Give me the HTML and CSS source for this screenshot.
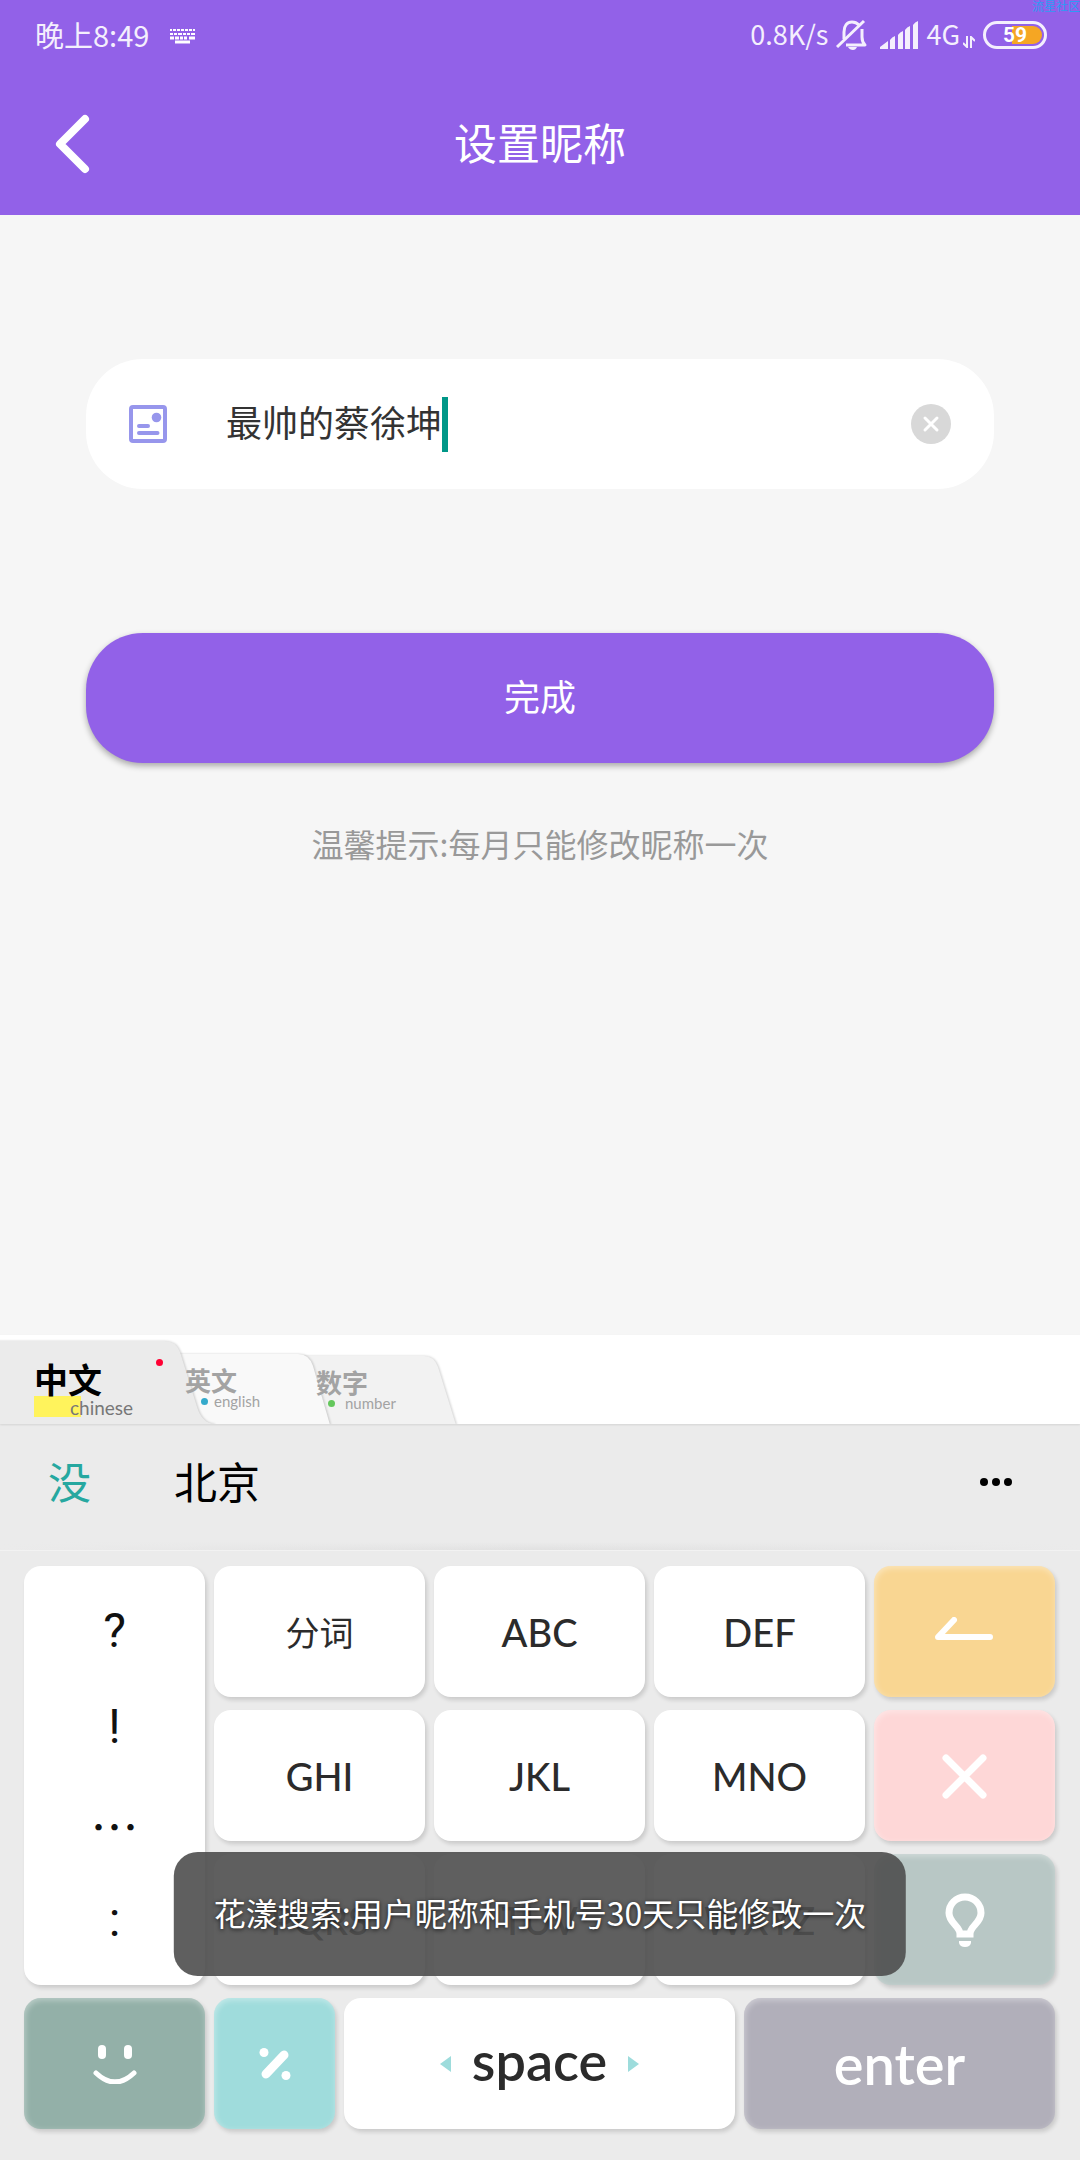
FILE: index.html
```html
<!DOCTYPE html>
<html lang="zh-CN">
<head>
<meta charset="utf-8">
<meta name="viewport" content="width=device-width, initial-scale=1">
<title>设置昵称</title>
<link rel="stylesheet" href="styles.css">
</head>
<body>
<div class="screen">
  <header class="header">
    <div class="status">
      <span class="status-time">晚上8:49</span>
      <svg class="status-keyboard" width="25" height="16" viewBox="0 0 25 16" fill="none" stroke="currentColor" stroke-width="2">
        <path d="M0 2h25" stroke-dasharray="2 1 3 1 3 1 3 1 3 1 3 1 3"/>
        <path d="M0 6h25" stroke-dasharray="3 1 3 1 4 1 3 1 3 1 4"/>
        <path d="M0 10h25" stroke-dasharray="4 1 4 1 3 1 3 2 6" stroke-width="3"/>
        <path d="M5 14h15" stroke-width="3"/>
      </svg>
      <span class="status-speed">0.8K/s</span>
      <svg class="status-bell" width="32" height="32" viewBox="0 0 32 32" fill="none" stroke="currentColor" stroke-width="3">
        <path d="M8 20v-7c0-6 3-10 8-10 3 0 5 1 7 3"/>
        <path d="M26 10v8c0 3 1 6 3 8H10" stroke-linejoin="round"/>
        <path d="M1 28 28 2"/>
        <path d="M12 28h9c-1 2-2 3-4 3s-4-1-5-3z" fill="currentColor" stroke="none"/>
      </svg>
      <svg class="status-signal" width="38" height="28" viewBox="0 0 38 28" fill="currentColor">
        <path d="M0 28v-2l8-6v8zM10 28v-9q2-3 5-4v13zM18 28V14q2-3 5-4v18zM25 28V9q2-3 5-4v23zM33 28V4q2-3 5-4v28z"/>
      </svg>
      <span class="status-net">4G</span>
      <svg class="status-data" width="12" height="12" viewBox="0 0 12 12" fill="none" stroke="currentColor" stroke-width="2">
        <path d="M4 0v11L0 7M8 12V1l4 4"/>
      </svg>
      <span class="battery"><span class="battery-fill"></span><span class="battery-text">59</span></span>
      <span class="watermark">流星社区</span>
    </div>
    <div class="navbar">
      <button class="back" type="button" aria-label="返回">
        <svg width="36" height="60" viewBox="0 0 36 60" fill="none" stroke="currentColor" stroke-width="8" stroke-linecap="round" stroke-linejoin="round"><path d="M31 5 6 30l25 25"/></svg>
      </button>
      <h1 class="title">设置昵称</h1>
    </div>
  </header>

  <main class="content">
    <form class="form">
      <div class="field">
        <label class="field-label" for="nickname" aria-label="昵称">
          <svg width="38" height="38" viewBox="0 0 38 38" fill="none" stroke="currentColor" stroke-width="4" stroke-linecap="round">
            <rect x="2" y="2" width="34" height="34" rx="2"/>
            <path d="M10 21h9M10 28h18.500"/>
            <circle cx="27.500" cy="12.500" r="4.800" fill="currentColor" stroke="none"/>
          </svg>
        </label>
        <input class="field-input" id="nickname" type="text" value="最帅的蔡徐坤">
        <span class="caret"></span>
        <button class="clear" type="button" aria-label="清除">
          <svg width="40" height="40" viewBox="0 0 40 40"><circle cx="20" cy="20" r="20" fill="#d8d8d8"/><path d="m14 14 12 12M26 14 14 26" stroke="#fff" stroke-width="3" stroke-linecap="round"/></svg>
        </button>
      </div>
      <button class="submit" type="button">完成</button>
      <p class="hint">温馨提示:每月只能修改昵称一次</p>
    </form>
  </main>

  <section class="keyboard" aria-label="键盘">
    <div class="tabs">
      <svg class="tabs-shape" width="480" height="89" viewBox="0 0 480 89">
        <g class="tab-shapes">
          <path fill="#f2f2f2" d="M280 21H424Q434 21 438 32L456 90H280z"/>
          <path fill="#f9f9f9" d="M160 19H298Q309 19 313 31L330 90H160z"/>
          <path fill="#ebebeb" d="M-4 6H164Q176 6 180 17L197 72Q202 88 214 89V92H-4z"/>
        </g>
      </svg>
      <button class="tab tab-zh" type="button"><span class="tab-name">中文</span><span class="tab-sub">chinese</span><i class="dot"></i></button>
      <button class="tab tab-en" type="button"><span class="tab-name">英文</span><span class="tab-sub"><i class="dot"></i>english</span></button>
      <button class="tab tab-num" type="button"><span class="tab-name">数字</span><span class="tab-sub"><i class="dot"></i>number</span></button>
    </div>
    <div class="candidates">
      <button class="candidate active" type="button">没</button>
      <button class="candidate" type="button">北京</button>
      <button class="more" type="button" aria-label="更多">
        <svg width="32" height="8" viewBox="0 0 32 8" fill="currentColor"><circle cx="4" cy="4" r="4"/><circle cx="16" cy="4" r="4"/><circle cx="28" cy="4" r="4"/></svg>
      </button>
    </div>
    <div class="keys">
      <div class="symbols">
        <button type="button">?</button>
        <button type="button">!</button>
        <button class="ellipsis" type="button">…</button>
        <button type="button">:</button>
      </div>
      <button class="key key-cjk" type="button">分词</button>
      <button class="key" type="button">ABC</button>
      <button class="key" type="button">DEF</button>
      <button class="key tint amber" type="button" aria-label="退格">
        <svg width="60" height="30" viewBox="0 0 60 30" fill="none" stroke="currentColor" stroke-width="6" stroke-linecap="round" stroke-linejoin="round"><path d="M55 20H3L19 3"/></svg>
      </button>
      <button class="key" type="button">GHI</button>
      <button class="key" type="button">JKL</button>
      <button class="key" type="button">MNO</button>
      <button class="key tint pink" type="button" aria-label="清空">
        <svg width="46" height="46" viewBox="0 0 46 46" fill="none" stroke="currentColor" stroke-width="7" stroke-linecap="round"><path d="m4 5 37 37M41 5 4 42"/></svg>
      </button>
      <button class="key" type="button">PQRS</button>
      <button class="key" type="button">TUV</button>
      <button class="key" type="button">WXYZ</button>
      <button class="key tint sage" type="button" aria-label="提示">
        <svg width="40" height="54" viewBox="0 0 40 54" fill="none" stroke="currentColor">
          <path stroke-width="7" d="M15 41c0-8-11-11-11-21C4 11 11 4 20 4s16 7 16 16c0 10-11 13-11 21z"/>
          <path d="M14 48h12v2q-1 4-6 4t-6-4z" fill="currentColor" stroke="none"/>
        </svg>
      </button>
      <div class="bottom-row">
        <button class="key tint green" type="button" aria-label="表情">
          <svg width="44" height="40" viewBox="0 0 44 40" fill="currentColor"><rect x="5" y="1" width="8" height="14" rx="4"/><rect x="31" y="1" width="8" height="14" rx="4"/><path d="M3 29q19 18 38 0" fill="none" stroke="currentColor" stroke-width="5" stroke-linecap="round"/></svg>
        </button>
        <button class="key tint aqua" type="button" aria-label="符号">
          <svg width="32" height="32" viewBox="0 0 32 32" fill="currentColor"><circle cx="5" cy="4.500" r="4.500"/><circle cx="27" cy="27.500" r="4.500"/><path d="M7 26 25 7" stroke="currentColor" stroke-width="9" stroke-linecap="round"/></svg>
        </button>
        <button class="key space" type="button">
          <svg width="12" height="16" viewBox="0 0 12 16" fill="#9ddcdc"><path d="M11 0v16L0 8z"/></svg>
          <span class="space-text">space</span>
          <svg width="12" height="16" viewBox="0 0 12 16" fill="#9ddcdc"><path d="M1 0v16l11-8z"/></svg>
        </button>
        <button class="key tint mauve" type="button">enter</button>
      </div>
    </div>
  </section>
  <div class="toast" role="status">花漾搜索:用户昵称和手机号30天只能修改一次</div>
</div>
</body>
</html>
```
FILE: styles.css
```css
* { box-sizing: border-box; }

body {
  margin: 0;
  background: #f6f6f6;
  color: #333;
  font-family: "Noto Sans CJK SC", sans-serif;
}

button {
  margin: 0;
  padding: 0;
  border: 0;
  background: none;
  color: inherit;
  font: inherit;
}

svg { display: block; flex: none; }

.screen {
  position: relative;
  display: flex;
  flex-direction: column;
  min-height: 100vh;
}

/* Header */
.header {
  background: #9261e8;
  color: #fff;
}

.status {
  position: relative;
  display: flex;
  align-items: center;
  height: 72px;
  padding: 0 33px 0 35px;
  color: #f4effd;
  font-size: 29px;
  line-height: 32px;
}

.status-time,
.status-speed,
.status-net { padding-bottom: 4px; }

.status-keyboard { margin-left: 21px; color: #fff; }
.status-speed { margin-left: auto; font-size: 27px; }
.status-bell { margin: 0 0 2px 8px; }
.status-signal { margin: 0 0 2px 12px; }
.status-net { margin-left: 8px; font-size: 27px; }
.status-data { margin: 12px 0 0 3px; }

.battery {
  position: relative;
  display: flex;
  align-items: center;
  justify-content: center;
  width: 64px;
  height: 28px;
  margin: 0 0 2px 8px;
  border: 3px solid #f4effd;
  border-radius: 14px;
}

.battery-fill {
  position: absolute;
  top: 2px;
  right: 2px;
  bottom: 2px;
  width: 30px;
  border-radius: 0 9px 9px 0;
  background: #f5a623;
}

.battery-text {
  position: relative;
  color: #fff;
  font: 700 21px/22px Roboto, sans-serif;
}

.watermark {
  position: absolute;
  top: 0;
  right: 0;
  color: #2c9cf5;
  font-size: 12px;
  line-height: 12px;
}

.navbar {
  display: grid;
  grid-template-columns: 90px 1fr 90px;
  align-items: center;
  height: 143px;
}

.back { justify-self: end; }

.title {
  margin: 0;
  padding-bottom: 6px;
  font-size: 43px;
  font-weight: 400;
  line-height: 60px;
  text-align: center;
}

/* Form */
.content {
  flex: 1;
  padding: 144px 86px 0;
}

.form {
  display: flex;
  flex-direction: column;
}

.field {
  display: flex;
  align-items: center;
  height: 130px;
  padding: 0 43px;
  border-radius: 57px;
  background: #fff;
}

.field-label { color: #9796ec; }

.field-input {
  width: 216px;
  height: 56px;
  margin-left: 59px;
  padding: 0 0 6px;
  border: 0;
  outline: 0;
  background: none;
  color: #333;
  font: 36px/50px "Noto Sans CJK SC", sans-serif;
}

.caret {
  width: 6px;
  height: 55px;
  background: #009788;
}

.clear { margin-left: auto; }

.submit {
  height: 130px;
  margin-top: 144px;
  padding-bottom: 6px;
  border-radius: 57px;
  background: #9261e8;
  box-shadow: 0 3px 6px rgba(0, 0, 0, .32);
  color: #fff;
  font-size: 36px;
}

.hint {
  margin: 56px 0 0;
  color: #999;
  font-size: 32px;
  line-height: 48px;
  text-align: center;
}

/* Keyboard */
.keyboard { background: #ebebeb; }

.tabs {
  position: relative;
  display: flex;
  height: 89px;
  background: #fff;
  box-shadow: 0 1px 2px rgba(0, 0, 0, .1);
}

.tabs-shape {
  position: absolute;
  top: 0;
  left: 0;
}

.tab-shapes path { filter: drop-shadow(1px 0 1px rgba(0, 0, 0, .18)); }

.tab {
  position: relative;
  display: flex;
  flex-direction: column;
  align-items: flex-start;
  color: #a3a3a3;
  font-family: Lato, "Noto Sans CJK SC", sans-serif;
}

.tab-name {
  font-size: 26px;
  font-weight: 700;
  line-height: 28px;
}

.tab-sub {
  display: flex;
  align-items: center;
  gap: 6px;
  margin-top: -2px;
  font-size: 15px;
  line-height: 16px;
}

.dot {
  width: 7px;
  height: 7px;
  border-radius: 50%;
}

.tab-zh {
  z-index: 0;
  width: 185px;
  padding: 26px 0 0 34px;
  color: #000;
}

.tab-zh .tab-name { font-size: 34px; line-height: 38px; }

.tab-zh .tab-sub {
  z-index: -1;
  margin-top: -3px;
  padding-left: 36px;
  background: linear-gradient(#fff35c, #fff35c) 0 0 / 47px 21px no-repeat;
  color: #777;
  font-size: 19px;
  line-height: 24px;
}

.tab-zh .dot { position: absolute; top: 24px; right: 22px; background: #f03; }
.tab-en { width: 131px; padding: 32px 0 0; }
.tab-en .tab-sub { padding-left: 16px; }
.tab-en .dot { background: #35aacb; }
.tab-num { width: 126px; padding: 34px 0 0; }
.tab-num .tab-sub { gap: 10px; padding-left: 12px; }
.tab-num .dot { background: #64c75c; }

.candidates {
  display: flex;
  align-items: center;
  height: 127px;
  padding: 0 68px 10px 48px;
  border-bottom: 1px solid #f2f2f2;
  background: linear-gradient(to right, #ebebeb, rgba(235, 235, 235, 0) 50%, #ebebeb), linear-gradient(#ebebeb 118px, #e1e1e1);
}

.candidate {
  margin-right: 83px;
  padding-bottom: 4px;
  color: #000;
  font-size: 43px;
  line-height: 60px;
}

.candidate.active { color: #26a8a0; }
.more { margin-left: auto; color: #000; }

.keys {
  display: grid;
  grid-template-columns: 181fr 211fr 211fr 211fr 181fr;
  grid-auto-rows: 131px;
  gap: 13px 9px;
  padding: 15px 25px 31px 24px;
}

.key,
.symbols {
  border-radius: 17px;
  background: #fff;
  box-shadow: 2px 3px 4px rgba(0, 0, 0, .14);
}

.key {
  display: flex;
  align-items: center;
  justify-content: center;
  color: #2b2b2b;
  font: 500 38px/48px Lato, sans-serif;
}

.key-cjk { font: 34px/48px "Noto Sans CJK SC", sans-serif; }

.symbols {
  grid-row: span 3;
  display: flex;
  flex-direction: column;
  padding: 17px 0;
}

.symbols button {
  flex: 1;
  color: #111;
  font: 48px/56px Roboto, sans-serif;
}

.symbols .ellipsis { font-family: "Noto Sans CJK SC", sans-serif; }

.bottom-row {
  grid-column: 1 / -1;
  display: grid;
  grid-template-columns: 181fr 121fr 391fr 311fr;
  gap: 9px;
}

.tint {
  color: #fff;
  box-shadow: 2px 3px 4px rgba(0, 0, 0, .14), inset 1px 2px 6px rgba(255, 255, 255, .4);
}

.amber { background: #f9d692; }
.pink { background: #fed7d7; }
.sage { background: #b8c7c5; }
.green { background: #93b0a8; }
.aqua { background: #9fdcdc; }
.mauve { background: #b1afba; font-size: 56px; font-weight: 600; }

.space {
  gap: 20px;
  font-size: 54px;
  font-weight: 600;
}

.space-text { padding-bottom: 6px; }

.toast {
  position: absolute;
  bottom: 184px;
  left: 50%;
  transform: translateX(-50%);
  padding: 36px 40px 40px;
  border-radius: 24px;
  background: rgba(78, 78, 78, .906);
  color: #fff;
  font-size: 32px;
  line-height: 48px;
  text-shadow: 0 1px 4px rgba(0, 0, 0, .8);
  white-space: nowrap;
}
```
